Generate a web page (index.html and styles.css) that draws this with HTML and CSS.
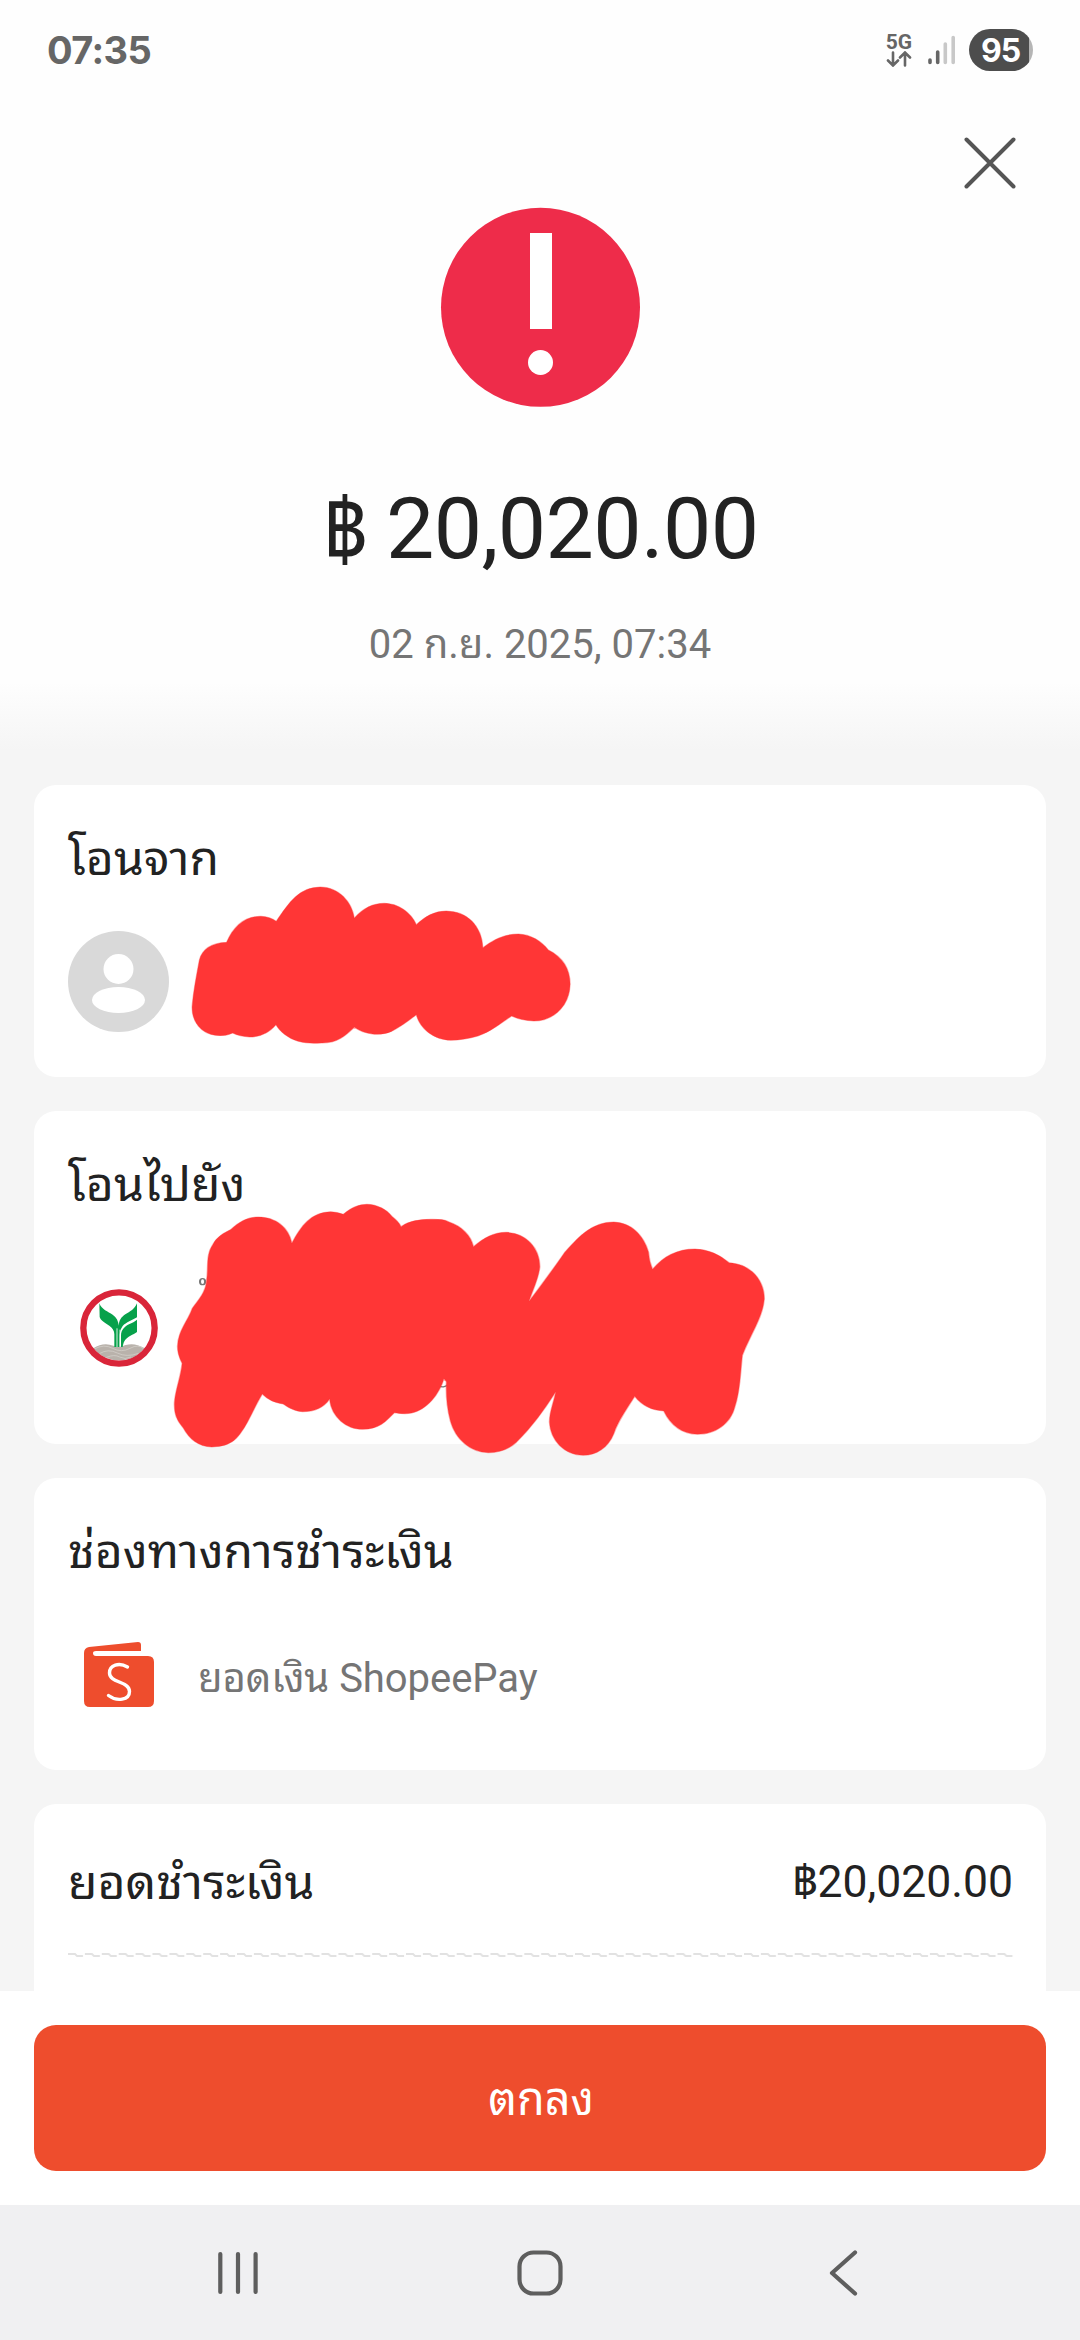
FILE: index.html
```html
<!DOCTYPE html>
<html lang="th">
<head>
<meta charset="utf-8">
<title>ShopeePay</title>
<link rel="stylesheet" href="styles.css">
</head>
<body>
<div class="screen">
  <header class="status">
    <span class="clock">07:35</span>
    <div class="status-icons">
      <div class="network"><span>5G</span>
        <svg width="26" height="16" viewBox="0 0 26 16"><path d="M7 1.500V14M2 9.500L7 14.500L12 9.500M19 14.500V2M14 6.500L19 1.500L24 6.500"/></svg>
      </div>
      <svg class="signal" width="28" height="30" viewBox="0 0 28 30"><path d="M2 25V27.500M9.700 17V27.500"/><path class="dim" d="M17.300 9V27.500M25.200 2.500V27.500"/></svg>
      <span class="battery">95</span>
    </div>
  </header>
  <main class="content">
    <section class="summary">
      <svg class="close" width="52" height="52" viewBox="0 0 52 52"><path d="M2.500 2.500L49.500 49.500M49.500 2.500L2.500 49.500"/></svg>
      <svg class="alert" width="200" height="200" viewBox="0 0 200 200"><circle cx="100.500" cy="100.300" r="99.500" fill="#ee2c4a"/><rect x="90" y="26" width="22" height="96" fill="#fff"/><circle cx="100.500" cy="155.500" r="12.500" fill="#fff"/></svg>
      <div class="amount"><span class="baht">฿</span><span>20,020.00</span></div>
      <div class="date">02 ก.ย. 2025, 07:34</div>
    </section>
    <section class="card card-from">
      <h2>โอนจาก</h2>
      <svg class="avatar" width="101" height="101" viewBox="0 0 101 101"><circle cx="50.500" cy="50.500" r="50.500" fill="#d9d9d9"/><circle cx="50.500" cy="38" r="15" fill="#fff"/><ellipse cx="50.500" cy="69" rx="26.500" ry="13" fill="#fff"/></svg>
      <svg class="scribble scribble-from" width="600" height="350" viewBox="0 0 1568 1050" preserveAspectRatio="none"><path d="M592 607C610 560 640 528 682 529C698 530 711 535 722 544C755 487 783 441 837 441C886 441 920 487 926 534C950 504 974 490 1004 490C1040 490 1074 517 1088 554C1110 530 1134 513 1166 513C1220 513 1259 557 1262 623C1289 600 1317 582 1355 582C1387 583 1416 604 1433 630C1470 651 1490 687 1490 733C1489 794 1450 843 1395 843C1373 842 1354 837 1337 828C1307 851 1283 876 1249 888C1226 895 1203 901 1178 901C1133 900 1097 865 1088 824C1064 846 1042 863 1022 875C991 890 953 883 926 862C902 888 881 910 840 909C821 910 801 911 779 904C753 895 731 874 721 854C704 878 679 891 652 891C636 890 622 887 608 879C594 887 578 888 562 886C526 880 501 846 502 800C505 755 513 710 521 660C528 630 551 609 592 607Z"/></svg>
    </section>
    <section class="card card-to">
      <h2>โอนไปยัง</h2>
      <svg class="bank" width="78" height="78" viewBox="0 0 234 234"><circle cx="117" cy="117" r="106" fill="#fff"/><path fill="#b9b2ab" d="M40 178Q70 158 100 170Q117 176 137 168Q164 160 193 177Q166 214 117 214Q70 214 40 178Z"/><path fill="none" stroke="#d8d4cf" stroke-width="2" d="M43 180Q72 164 98 178T150 178T190 179M58 194Q84 178 112 192T176 193M80 205Q103 195 119 204T153 204"/><path fill="#07a14b" d="M58 43C65 62 84 68 98 77C110 85 115 96 116 110C117 94 124 84 136 76C150 68 164 60 171 43V85C157 94 138 100 128 111C120 121 119 133 119 148V174H103V136C103 124 97 117 88 110C76 102 63 96 59 84ZM171 92V129C160 137 142 143 134 155C130 161 129 168 128 174H123V140C123 122 135 112 147 106C156 101 165 98 171 92Z"/><path stroke="#fff" stroke-width="2.500" d="M111 118V174M120 122V174"/><circle cx="117" cy="117" r="107" fill="none" stroke="#d92539" stroke-width="19"/></svg>
      <svg class="scribble scribble-to" width="800" height="380" viewBox="0 0 1568 1140" preserveAspectRatio="none"><ellipse class="trace" cx="397" cy="545" rx="5" ry="9"/><path class="trace" d="M860 857Q869 866 879 853"/><path d="M453 388C469 365 485 351 506 351C540 351 566 382 572 430C590 378 610 336 648 335C656 335 665 338 673 343C689 322 704 313 719 313C740 314 758 329 768 349C777 360 783 370 786 380C803 361 824 358 844 358C856 358 868 357 879 365C906 379 923 407 928 440C949 413 968 397 992 397C1030 398 1058 443 1058 500C1056 534 1045 566 1037 604C1061 555 1084 508 1107 457C1129 420 1157 366 1203 366C1237 367 1262 407 1271 456C1272 477 1275 493 1279 508C1301 468 1327 447 1362 447C1390 448 1411 465 1429 488C1469 491 1498 537 1498 597C1495 652 1472 700 1455 766C1451 818 1451 873 1440 922C1432 970 1403 1003 1367 1003C1338 1002 1315 977 1301 933C1278 932 1259 918 1244 889C1231 921 1211 963 1203 1001C1192 1043 1169 1066 1143 1066C1106 1065 1079 1021 1077 966C1077 935 1086 905 1089 876C1069 924 1045 977 1012 1027C996 1049 979 1058 957 1058C922 1057 893 1018 883 964C876 924 874 882 875 845L870 836C861 882 837 929 807 939C793 944 782 940 773 938C757 963 743 988 711 988C681 989 650 954 646 897C634 924 616 935 593 935C579 934 567 925 555 912C539 909 526 900 514 882C496 926 485 980 463 1015C450 1036 433 1041 415 1041C389 1040 371 1017 359 983C346 960 341 941 342 907C344 868 355 828 357 790C352 774 348 761 348 739C349 692 368 664 377 625C388 601 404 577 405 541C409 504 403 465 417 434C424 412 438 399 453 388Z"/></svg>
    </section>
    <section class="card card-method">
      <h2>ช่องทางการชำระเงิน</h2>
      <div class="method">
        <div class="wallet"><svg width="70" height="66" viewBox="0 0 70 66"><path fill="#ee4d2d" d="M5 5L54 0Q57 0 57 3V9H12Q9 9 9 11Q9 14 12 14H64Q70 14 70 20V59Q70 65 64 65H6Q0 65 0 59V11Q0 6 5 5Z"/><path fill="none" stroke="#fff" stroke-width="3.400" stroke-linecap="round" d="M43.500 25C35 20 25.500 23 25.500 31C25.500 41 45.500 39 45.500 49.500C45.500 58 33 60 24.500 53.500"/></svg></div>
        <span class="method-name">ยอดเงิน ShopeePay</span>
      </div>
    </section>
    <section class="card card-total">
      <div class="total"><span class="total-label">ยอดชำระเงิน</span><span class="total-value">฿20,020.00</span></div>
      <svg class="wave" width="946" height="8" viewBox="0 0 946 8"><defs><pattern id="wave" width="16.900" height="8" patternUnits="userSpaceOnUse"><path d="M0 3H7L9 5H15" fill="none" stroke="#e2e2e2" stroke-width="1.800"/></pattern></defs><rect width="946" height="8" fill="url(#wave)"/></svg>
    </section>
  </main>
  <footer class="action"><button>ตกลง</button></footer>
  <nav class="nav">
    <svg width="46" height="46" viewBox="0 0 46 46"><path d="M6.300 4V42M24 4V42M41.600 4V42"/></svg>
    <svg width="46" height="46" viewBox="0 0 46 46"><rect x="2.500" y="2.500" width="41" height="41" rx="14"/></svg>
    <svg width="46" height="46" viewBox="0 0 46 46"><path d="M35 2.500L12 23L35 43.500"/></svg>
  </nav>
</div>
</body>
</html>
```
FILE: styles.css
```css
* { box-sizing: border-box; }
body { margin: 0; font-family: Roboto, "Noto Sans Thai Looped", "Noto Looped Thai", "Noto Sans Thai", "Noto Sans", sans-serif; color: #222; }
.screen { width: 1080px; height: 2340px; display: flex; flex-direction: column; overflow: hidden; background: #f5f5f5; }
.status { height: 100px; flex: none; display: flex; justify-content: space-between; padding: 28px 47px 0 47px; background: #fefefe; color: #666; }
.clock { font: 700 38px/45px Inter, sans-serif; letter-spacing: -.6px; }
.status-icons { display: flex; height: 43px; align-items: center; }
.network { display: flex; flex-direction: column; align-items: center; width: 26px; margin-right: 16px; font: 700 21px/18px Roboto, sans-serif; color: #666; }
.network svg { fill: none; stroke: #666; stroke-width: 2.600; stroke-linecap: round; }
.signal { margin-right: 13px; fill: none; stroke: #666; stroke-width: 3.600; stroke-linecap: round; }
.signal .dim { stroke: #c8c8c8; }
.battery { width: 64px; height: 42px; padding-right: 1px; border-radius: 21px; background: linear-gradient(90deg, #4d4d4d 60px, #b5b5b5 60px); color: #fff; text-align: center; font: 700 32px/43px Inter, sans-serif; letter-spacing: -1px; }
.content { height: 1891px; flex: none; display: flex; flex-direction: column; gap: 34px; overflow: hidden; }
.summary { position: relative; flex: none; height: 651px; display: flex; flex-direction: column; align-items: center; padding-top: 107px; background: linear-gradient(#fefefe 582px, #f5f5f5 651px); }
.close { position: absolute; right: 64px; top: 37px; fill: none; stroke: #555; stroke-width: 4; stroke-linecap: round; }
.amount { display: flex; gap: 16px; margin-top: 70px; height: 104px; font-size: 86px; line-height: 104px; letter-spacing: -.6px; }
.baht { transform: translate(-3px, 2px) scaleX(.9); transform-origin: right; }
.date { margin-top: 39px; height: 50px; font-size: 40px; line-height: 50px; color: #757575; }
.card { position: relative; flex: none; margin: 0 34px; padding: 0 34px; border-radius: 22px; background: #fff; }
.card-from { height: 292px; padding-top: 44px; }
.card-to { height: 333px; padding-top: 44px; }
.card-method { height: 292px; padding-top: 44px; }
.card-total { height: 240px; }
.card h2 { margin: 0; font-size: 48px; line-height: 60px; font-weight: 400; }
.avatar { display: block; margin-top: 42px; }
.bank { display: block; margin: 74px 0 0 12px; }
.scribble { position: absolute; z-index: 1; left: -34px; fill: #ff3636; stroke: rgba(255, 54, 54, .4); stroke-width: 3; }
.scribble-from { top: -45px; }
.scribble-to { top: -11px; }
.scribble .trace { fill: none; stroke: #777; stroke-width: 4; }
.method { display: flex; align-items: center; height: 102px; margin-top: 42px; font-size: 40px; color: #757575; }
.method-name { padding-bottom: 3px; letter-spacing: -.05px; }
.wallet { width: 130px; padding-left: 16px; display: flex; }
.total { height: 158px; display: flex; align-items: center; justify-content: space-between; padding-bottom: 12px; font-size: 44.500px; }
.total-label { font-size: 48px; }
.total-value { margin-right: -1px; }
.wave { display: block; margin-top: -11px; }
.action { height: 214px; flex: none; padding: 34px; background: #fff; }
.action button { display: block; width: 100%; height: 146px; border: 0; border-radius: 22px; background: #ee4d2d; color: #fff; font: 400 45px/149px Roboto, "Noto Sans Thai Looped", "Noto Looped Thai", "Noto Sans Thai", sans-serif; padding: 0 0 0 2px; }
.nav { height: 135px; flex: none; display: flex; justify-content: space-between; align-items: center; padding: 0 214px; background: #f0f0f2; }
.nav svg { fill: none; stroke: #5e5e5e; stroke-width: 4.200; stroke-linecap: round; stroke-linejoin: round; }
```
